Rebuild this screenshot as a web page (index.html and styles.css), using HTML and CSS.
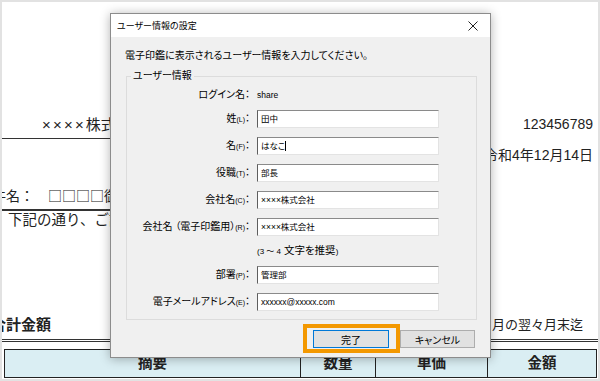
FILE: index.html
```html
<!DOCTYPE html>
<html lang="ja">
<head>
  <meta charset="UTF-8" />
  <meta name="viewport" content="width=device-width, initial-scale=1.0"/>
  <title>ユーザー情報の設定</title>
  <link rel="stylesheet" href="styles.css">
</head>
<body>
  <div class="frame">
    <div class="doc">
      <div class="row-client">
        <div class="client"><span class="times">××××</span>株式会社　御中</div>
        <div class="number">123456789</div>
      </div>
      <div class="date">令和4年12月14日</div>
      <div class="subject">件名：　□□□□御請求書</div>
      <p class="note">下記の通り、ご請求</p>
      <div class="row-total">
        <div class="total">合計金額</div>
        <div class="due">当月の翌々月末迄</div>
      </div>
      <div class="table-head">
        <div>摘要</div>
        <div>数量</div>
        <div>単価</div>
        <div>金額</div>
      </div>
    </div>

    <div class="dialog">
      <div class="titlebar">
        <span>ユーザー情報の設定</span>
        <svg class="close" width="10" height="10" viewBox="0 0 10 10">
          <path d="M0.5 0.5 L9.5 9.5 M9.5 0.5 L0.5 9.5" stroke="#222" stroke-width="1" fill="none"/>
        </svg>
      </div>
      <div class="dialog-body">
        <p class="desc">電子印鑑に表示されるユーザー情報を入力してください。</p>
        <fieldset class="group">
          <legend>ユーザー情報</legend>
          <div class="fields">
            <div class="label">ログイン名：</div>
            <div class="value">share</div>

            <div class="label">姓<small>(L)</small>：</div>
            <div class="input">田中</div>

            <div class="label">名<small>(F)</small>：</div>
            <div class="input">はなこ<span class="caret"></span></div>

            <div class="label">役職<small>(T)</small>：</div>
            <div class="input">部長</div>

            <div class="label">会社名<small>(C)</small>：</div>
            <div class="input">××××株式会社</div>

            <div class="label">会社名 （電子印鑑用）<small>(R)</small>：</div>
            <div class="input">××××株式会社</div>

            <div></div>
            <div class="hint"><small>(3 〜 4</small> 文字を推奨<small>)</small></div>

            <div class="label">部署<small>(P)</small>：</div>
            <div class="input">管理部</div>

            <div class="label">電子メールアドレス<small>(E)</small>：</div>
            <div class="input">xxxxxx@xxxxx.com</div>
          </div>
        </fieldset>
        <div class="buttons">
          <div class="btn-wrap">
            <button class="btn btn-default">完了</button>
            <span class="highlight"></span>
          </div>
          <button class="btn">キャンセル</button>
        </div>
      </div>
    </div>
  </div>
</body>
</html>
```

FILE: styles.css
```css
body {
  margin: 0;
  background: #fff;
  font-family: "Liberation Sans", "Noto Sans CJK JP", sans-serif;
}

.frame {
  position: relative;
  width: 600px;
  height: 381px;
  box-sizing: border-box;
  border: 2px solid #e2e2e2;
  background: #fff;
  overflow: hidden;
}

/* background document */
.doc {
  color: #222;
  font-size: 14px;
}

.row-client {
  display: flex;
  justify-content: space-between;
  margin-top: 113px;
}

.client {
  width: 380px;
  padding-left: 40px;
  font-size: 15px;
  line-height: 20px;
  padding-bottom: 3px;
  border-bottom: 1px solid #333;
}

.client .times {
  letter-spacing: 2.2px;
}

.number {
  line-height: 18px;
  padding-right: 5px;
}

.date {
  margin-top: 6px;
  line-height: 20px;
  text-align: right;
  padding-right: 5px;
}

.subject {
  margin-top: 20px;
  width: 400px;
  font-family: "Noto Sans CJK JP", sans-serif;
  line-height: 20px;
  padding-bottom: 4px;
  text-indent: -10px;
  border-bottom: 2px solid #333;
}

.note {
  margin: 0;
  padding-left: 6px;
  font-size: 14.5px;
  line-height: 18px;
}

.row-total {
  display: flex;
  justify-content: space-between;
  margin-top: 86px;
  line-height: 20px;
  padding-bottom: 4px;
  border-bottom: 3px double #333;
}

.total {
  font-weight: bold;
  font-size: 15px;
  text-indent: -11px;
}

.due {
  font-size: 13px;
  padding-right: 15px;
}

.table-head {
  display: grid;
  grid-template-columns: 295px 75px 112px 1fr;
  margin: 7px 1px 0 2px;
  height: 29px;
  box-sizing: border-box;
  border: 1px solid #222;
  background: #daeef3;
  font-weight: bold;
  font-size: 14.5px;
  line-height: 27px;
  text-align: center;
}

.table-head div + div {
  border-left: 1px solid #222;
}

/* dialog */
.dialog {
  position: absolute;
  left: 108px;
  top: 11px;
  width: 381px;
  height: 345px;
  box-sizing: border-box;
  border: 1px solid #8c8c8c;
  background: #f0f0f0;
  box-shadow: 0 1px 10px rgba(0, 0, 0, 0.3);
  font-feature-settings: "palt";
  color: #000;
}

.titlebar {
  display: flex;
  justify-content: space-between;
  align-items: center;
  height: 23px;
  padding: 0 12px 0 6px;
  background: #fff;
  font-size: 9px;
}

.close {
  display: block;
}

.dialog-body {
  padding: 12px 13px 11px 14px;
}

.desc {
  margin: 0;
  font-size: 10px;
  line-height: 14px;
}

.group {
  margin: 7px 0 0 1px;
  padding: 7px 0 8px 0;
  border: 1px solid #dcdcdc;
  min-width: 0;
}

.group legend {
  margin-left: 4px;
  padding: 0 2px;
  font-size: 10px;
  line-height: 12px;
}

.fields {
  display: grid;
  grid-template-columns: 123px 182px;
  column-gap: 7px;
  row-gap: 9px;
  align-items: center;
}

.label {
  text-align: right;
  font-size: 10px;
  line-height: 12px;
  white-space: nowrap;
}

.label small {
  font-size: 7px;
}

.value {
  font-size: 8.5px;
  line-height: 12px;
}

.input {
  height: 18px;
  box-sizing: border-box;
  padding-left: 3px;
  background: #fff;
  border: 1px solid;
  border-color: #8a8a8a #e3e3e3 #e3e3e3 #5e5e5e;
  font-size: 8.5px;
  line-height: 16px;
  white-space: nowrap;
}

.caret {
  display: inline-block;
  width: 1px;
  height: 10px;
  background: #000;
  vertical-align: -2px;
}

.hint {
  font-size: 10.5px;
  line-height: 10px;
}

.hint small {
  font-size: 8px;
}

.buttons {
  display: flex;
  justify-content: flex-end;
  gap: 11px;
  margin-top: 10px;
  padding-right: 2px;
}

.btn-wrap {
  position: relative;
}

.btn {
  display: block;
  width: 75px;
  height: 18px;
  padding: 0;
  background: #e1e1e1;
  border: 1px solid #adadad;
  font-family: inherit;
  font-feature-settings: "palt";
  font-size: 10px;
  color: #000;
}

.btn-default {
  width: 76px;
  border-color: #0078d7;
}

.highlight {
  position: absolute;
  top: -6px;
  right: -11px;
  bottom: -5px;
  left: -10px;
  border: 4px solid #f39800;
  pointer-events: none;
}
```
